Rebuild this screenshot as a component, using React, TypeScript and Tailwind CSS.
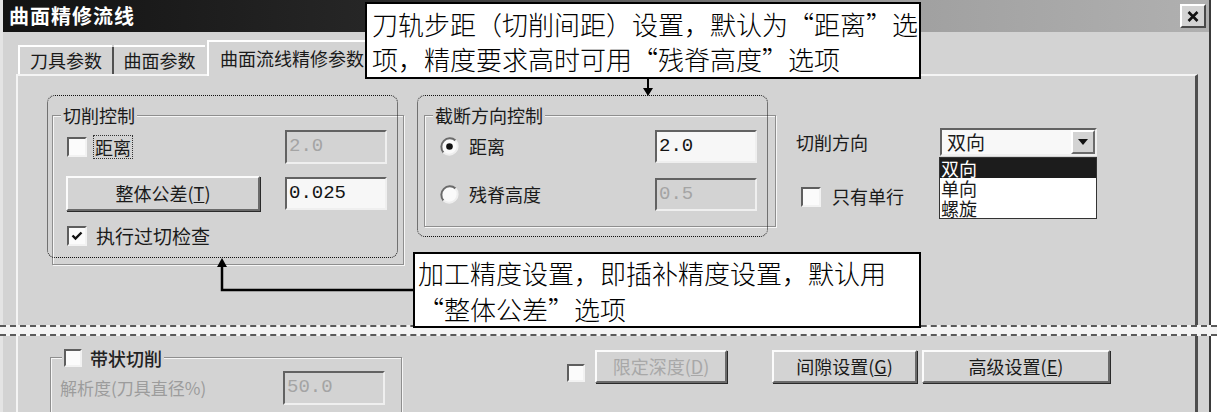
import React from "react";

function Check({ checked = false, size = 20 }: { checked?: boolean; size?: number }) {
  return (
    <div
      className={`flex shrink-0 items-center justify-center border-2 border-t-[#5e5e5e] border-l-[#5e5e5e] border-b-[#f2f2f2] border-r-[#f2f2f2] bg-[#fbfbfb] ${
        size === 18 ? "h-[18px] w-[18px]" : "h-[20px] w-[20px]"
      }`}
    >
      {checked && (
        <svg width="12" height="10" viewBox="0 0 12 10">
          <path d="M1.5 4.5 L4.5 7.5 L10.5 1.5" fill="none" stroke="#111" strokeWidth="2.4" />
        </svg>
      )}
    </div>
  );
}

function Radio({ checked = false }: { checked?: boolean }) {
  return (
    <svg width="19" height="19" viewBox="0 0 19 19" className="shrink-0">
      <circle cx="9.5" cy="9.5" r="8.5" fill="#fafafa" />
      <path d="M3.5 15.5 A8.5 8.5 0 0 1 15.5 3.5" fill="none" stroke="#6a6a6a" strokeWidth="2" />
      <path d="M15.5 3.5 A8.5 8.5 0 0 1 3.5 15.5" fill="none" stroke="#eeeeee" strokeWidth="2" />
      {checked && <circle cx="9.5" cy="9.5" r="3.3" fill="#111" />}
    </svg>
  );
}

function Field({ value, disabled = false, tall = false }: { value: string; disabled?: boolean; tall?: boolean }) {
  return (
    <div
      className={`w-[102px] shrink-0 border-2 border-t-[#626262] border-l-[#626262] border-b-[#efefef] border-r-[#efefef] pl-[2px] font-['Liberation_Mono',monospace] text-[19px] ${
        tall ? "h-[34px] leading-[29px]" : "h-[33px] leading-[28px]"
      } ${disabled ? "bg-[#d3d3d3] text-[#a4a4a4]" : "bg-[#f7f7f7] text-[#141414]"}`}
    >
      {value}
    </div>
  );
}

function Btn({ children, className = "", disabled = false }: { children: React.ReactNode; className?: string; disabled?: boolean }) {
  return (
    <div
      className={`flex shrink-0 items-center justify-center border-2 border-t-[#fbfbfb] border-l-[#fbfbfb] border-b-[#6a6a6a] border-r-[#6a6a6a] bg-[#d3d3d3] text-[18px] shadow-[1px_1px_0_#2a2a2a] ${
        disabled ? "text-[#a8a8a8]" : "text-[#1a1a1a]"
      } ${className}`}
    >
      {children}
    </div>
  );
}

function Group({ label, className = "", children }: { label: React.ReactNode; className?: string; children?: React.ReactNode }) {
  return (
    <div className={`relative shrink-0 border border-[#8e8e8e] shadow-[inset_1px_1px_0_#f6f6f6,1px_1px_0_#f6f6f6] ${className}`}>
      <div className="absolute -top-[13px] left-[8px] bg-[#d3d3d3] px-[2px] text-[18px] leading-[24px]">{label}</div>
      {children}
    </div>
  );
}

export default function App() {
  return (
    <div className="relative h-[412px] w-[1217px] overflow-hidden bg-white font-['Noto_Sans_CJK_SC',sans-serif] text-[#1a1a1a]">
      <div className="flex h-full w-[1211px] flex-col border-l-[3px] border-r-[2px] border-l-[#e4e4e4] border-r-[#3a3a3a] bg-[#d3d3d3]">
        {/* title bar */}
        <div className="flex h-[32px] shrink-0 items-center justify-between bg-[linear-gradient(90deg,#121212_0%,#262626_30%,#a0a0a0_75%,#b0b0b0_100%)] pl-[6px] pr-[3px]">
          <span className="text-[20px] font-bold leading-[28px] tracking-[1px] text-white">曲面精修流线</span>
          <div className="flex h-[24px] w-[26px] items-center justify-center border-2 border-t-white border-l-white border-b-[#4a4a4a] border-r-[#4a4a4a] bg-[#d3d3d3]">
            <svg width="12" height="11" viewBox="0 0 12 11">
              <path d="M1.5 1 L10.5 10 M10.5 1 L1.5 10" stroke="#111" strokeWidth="2.6" />
            </svg>
          </div>
        </div>

        {/* upper part */}
        <div className="flex h-[294px] shrink-0 flex-col pl-[13px] pr-[11px]">
          <div className="mt-[8px] flex h-[34px] shrink-0 items-end pl-[2px]">
            <div className="flex h-[29px] w-[94px] items-center justify-center border-t-2 border-l-2 border-white text-[18px]">刀具参数</div>
            <div className="h-[27px] w-[2px] bg-[#505050]" />
            <div className="flex h-[29px] w-[91px] items-center justify-center border-t-2 border-white text-[18px]">曲面参数</div>
            <div className="relative z-10 -mb-[2px] ml-[2px] flex h-[36px] w-[175px] items-center border-t-2 border-l-2 border-r-2 border-t-white border-l-white border-r-[#555] bg-[#d3d3d3] pb-[2px] pl-[11px] text-[18px]">
              曲面流线精修参数
            </div>
          </div>
          <div className="flex flex-1 items-start border-t-2 border-l-2 border-r-[3px] border-t-[#f4f4f4] border-l-[#f4f4f4] border-r-[#4e4e4e] pl-[34px] pt-[39px]">
            {/* group 1 */}
            <Group label="切削控制" className="h-[150px] w-[352px]">
              <div className="absolute -left-[6px] -top-[21px] h-[163px] w-[351px] rounded-[8px] border-[1.5px] border-dotted border-[#111]" />
              <div className="flex flex-col pl-[14px] pr-[16px] pt-[14px]">
                <div className="flex h-[34px] items-center">
                  <Check />
                  <span className="ml-[6px] border border-dotted border-[#333] px-[1px] text-[18px] leading-[22px]">距离</span>
                  <div className="ml-auto">
                    <Field value="2.0" disabled tall />
                  </div>
                </div>
                <div className="mt-[12px] flex h-[35px] items-center">
                  <Btn className="-ml-[1px] h-[35px] w-[194px]">
                    整体公差(<span className="underline">T</span>)
                  </Btn>
                  <div className="ml-auto">
                    <Field value="0.025" />
                  </div>
                </div>
                <div className="mt-[13px] flex items-center">
                  <Check checked />
                  <span className="ml-[9px] text-[19px] leading-[24px]">执行过切检查</span>
                </div>
              </div>
            </Group>

            {/* group 2 */}
            <Group label="截断方向控制" className="ml-[20px] h-[112px] w-[352px]">
              <div className="absolute -left-[8px] -top-[21px] h-[142px] w-[351px] rounded-[8px] border-[1.5px] border-dotted border-[#111]" />
              <div className="flex flex-col pl-[15px] pr-[18px] pt-[14px]">
                <div className="flex h-[33px] items-center">
                  <Radio checked />
                  <span className="ml-[10px] text-[18px]">距离</span>
                  <div className="ml-auto">
                    <Field value="2.0" />
                  </div>
                </div>
                <div className="mt-[15px] flex h-[33px] items-center">
                  <Radio />
                  <span className="ml-[10px] text-[18px]">残脊高度</span>
                  <div className="ml-auto">
                    <Field value="0.5" disabled />
                  </div>
                </div>
              </div>
            </Group>

            {/* right column */}
            <div className="ml-[20px] mt-[13px] flex flex-col">
              <div className="flex items-center">
                <span className="w-[144px] text-[18px]">切削方向</span>
                <div className="relative flex h-[28px] w-[157px] items-center border-2 border-t-[#626262] border-l-[#626262] border-b-[#efefef] border-r-[#efefef] bg-[#f8f8f8]">
                  <span className="flex-1 pl-[5px] text-[19px] leading-[24px]">双向</span>
                  <div className="flex h-[24px] w-[24px] items-center justify-center border-2 border-t-white border-l-white border-b-[#6a6a6a] border-r-[#6a6a6a] bg-[#d3d3d3]">
                    <svg width="10" height="6" viewBox="0 0 10 6">
                      <path d="M0 0 H10 L5 6 Z" fill="#111" />
                    </svg>
                  </div>
                  <div className="absolute -left-[3px] top-[27px] z-20 w-[158px] border border-[#333] bg-white text-[18px] leading-[20px]">
                    <div className="h-[20px] bg-[#1c1c1c] pl-[1px] text-white">双向</div>
                    <div className="h-[20px] pl-[1px]">单向</div>
                    <div className="h-[20px] pl-[1px]">螺旋</div>
                  </div>
                </div>
              </div>
              <div className="mt-[27px] flex items-center pl-[5px]">
                <Check />
                <span className="ml-[11px] text-[18px]">只有单行</span>
              </div>
            </div>
          </div>
        </div>

        <div className="h-[10px] shrink-0" />

        {/* lower part */}
        <div className="flex flex-1 flex-col pl-[13px] pr-[11px]">
          <div className="flex flex-1 items-start border-l-2 border-r-[3px] border-l-[#f4f4f4] border-r-[#4e4e4e] pl-[32px] pt-[14px]">
            <div className="relative mt-[7px] h-[70px] w-[352px] shrink-0 border border-[#8e8e8e] shadow-[inset_1px_1px_0_#f6f6f6,1px_1px_0_#f6f6f6]">
              <div className="absolute -top-[11px] left-[11px] flex items-center bg-[#d3d3d3] px-[2px]">
                <Check size={18} />
                <span className="ml-[8px] text-[18px] font-medium leading-[22px] text-[#222]">带状切削</span>
              </div>
              <div className="flex items-center pl-[9px] pt-[13px]">
                <span className="w-[223px] text-[17px] text-[#9c9c9c]">解析度(刀具直径%)</span>
                <Field value="50.0" disabled tall />
              </div>
            </div>
            <div className="ml-[165px] mt-[14px]">
              <Check size={18} />
            </div>
            <Btn disabled className="ml-[10px] h-[33px] w-[132px]">
              限定深度(<span className="underline">D</span>)
            </Btn>
            <Btn className="ml-[45px] h-[33px] w-[145px]">
              间隙设置(<span className="underline">G</span>)
            </Btn>
            <Btn className="ml-[5px] h-[33px] w-[188px]">
              高级设置(<span className="underline">E</span>)
            </Btn>
          </div>
        </div>
      </div>

      {/* break line across the page */}
      <div className="absolute left-0 right-0 top-[325px] z-30 h-[11px] border-y-2 border-dashed border-y-[#5a5a5a] bg-[#f4f4f4]" />

      {/* callout 1 */}
      <div className="absolute left-[365px] top-[2px] z-30 h-[77px] w-[556px] overflow-hidden border-2 border-black bg-white px-[5px] pt-[2px] text-[26px] font-light leading-[35px] text-black">
        <div className="whitespace-nowrap">刀轨步距（切削间距）设置，默认为“距离”选</div>
        <div className="whitespace-nowrap">项，精度要求高时可用“残脊高度”选项</div>
      </div>
      <svg className="absolute left-[640px] top-[78px] z-30" width="16" height="20" viewBox="0 0 16 20">
        <path d="M8 0 V12" stroke="#000" strokeWidth="2" />
        <path d="M3 10 H13 L8 18 Z" fill="#000" />
      </svg>

      {/* callout 2 */}
      <div className="absolute left-[413px] top-[252px] z-30 h-[76px] w-[508px] overflow-hidden border-2 border-black bg-white px-[3px] pt-[1px] text-[26px] font-light leading-[36px] text-black">
        <div className="whitespace-nowrap">加工精度设置，即插补精度设置，默认用</div>
        <div className="whitespace-nowrap">“整体公差”选项</div>
      </div>
      <svg className="absolute left-[214px] top-[256px] z-30" width="200" height="37" viewBox="0 0 200 37">
        <path d="M200 34 H8 V9" fill="none" stroke="#000" strokeWidth="2.5" />
        <path d="M3 11 H13 L8 2 Z" fill="#000" />
      </svg>
    </div>
  );
}
